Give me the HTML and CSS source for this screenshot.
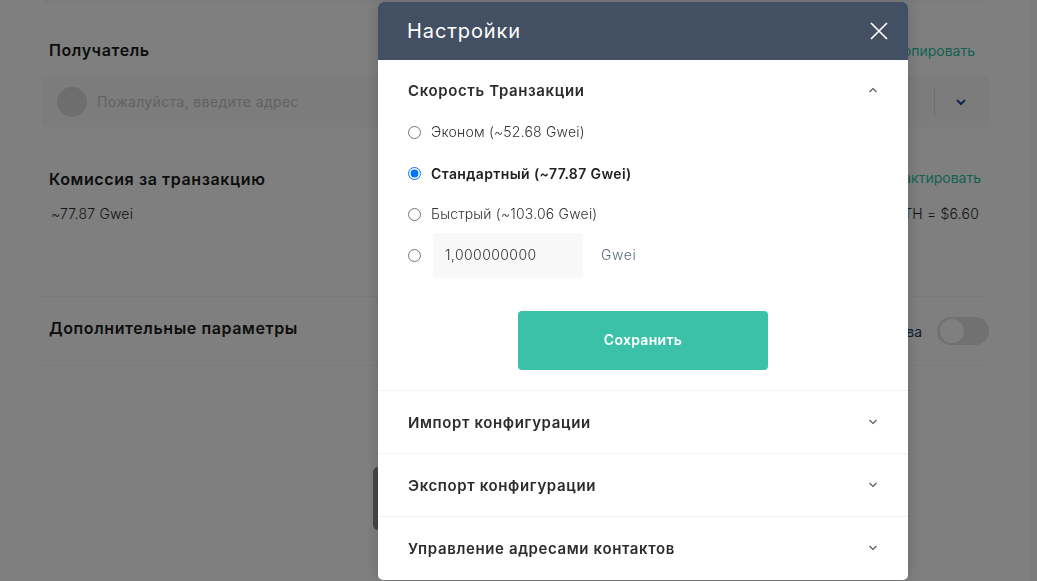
FILE: index.html
```html
<!DOCTYPE html>
<html lang="ru">
<head>
<meta charset="utf-8">
<title>Настройки</title>
<link rel="stylesheet" href="styles.css">
</head>
<body>
<div class="page">
  <main class="content">
    <div class="top-band"></div>
    <section class="recipient">
      <div class="row">
        <h2 class="label">Получатель</h2>
        <a class="link link-copy">Копировать</a>
      </div>
      <div class="address">
        <span class="avatar"></span>
        <span class="placeholder">Пожалуйста, введите адрес</span>
        <span class="divider"></span>
        <svg class="drop" width="12" height="8" viewBox="0 0 12 8"><path d="M2 2l4 4 4-4" fill="none" stroke="#2a4a9a" stroke-width="2"/></svg>
      </div>
    </section>
    <section class="fee">
      <div class="row">
        <h2 class="label">Комиссия за транзакцию</h2>
        <a class="link link-edit">Редактировать</a>
      </div>
      <div class="row fee-values">
        <span>~77.87 Gwei</span>
        <span>0.001 ETH = $6.60</span>
      </div>
    </section>
    <section class="advanced">
      <h2 class="label label-adv">Дополнительные параметры</h2>
      <div class="adv-right">
        <span class="adv-text">Только для эксперта ва</span>
        <span class="toggle"><span class="knob"></span></span>
      </div>
    </section>
  </main>
  <div class="scroll-strip"></div>
</div>
<div class="side-tab"></div>
<div class="backdrop"></div>
<div class="modal">
  <header class="modal-head">
    <h1 class="modal-title">Настройки</h1>
    <svg class="close" width="18" height="18" viewBox="0 0 18 18"><path d="M1 1l16 16M17 1L1 17" stroke="#fff" stroke-width="1.7" fill="none"/></svg>
  </header>
  <section class="acc acc-open">
    <div class="acc-head">
      <span class="acc-title">Скорость Транзакции</span>
      <svg class="chev" width="10" height="6" viewBox="0 0 10 6"><path d="M1.500 5L5 1.500 8.500 5" fill="none" stroke="#555" stroke-width="1.100"/></svg>
    </div>
    <label class="opt"><input type="radio" name="speed"><span class="opt-text">Эконом (~52.68 Gwei)</span></label>
    <label class="opt opt-on"><input type="radio" name="speed" checked><span>Стандартный (~77.87 Gwei)</span></label>
    <label class="opt"><input type="radio" name="speed"><span class="opt-text">Быстрый (~103.06 Gwei)</span></label>
    <div class="opt opt-custom">
      <input type="radio" name="speed">
      <span class="gas">1,000000000</span>
      <span class="unit">Gwei</span>
    </div>
    <div class="save-wrap"><button class="save">Сохранить</button></div>
  </section>
  <section class="acc">
    <div class="acc-head">
      <span class="acc-title">Импорт конфигурации</span>
      <svg class="chev" width="10" height="6" viewBox="0 0 10 6"><path d="M1.500 1L5 4.500 8.500 1" fill="none" stroke="#555" stroke-width="1.100"/></svg>
    </div>
  </section>
  <section class="acc">
    <div class="acc-head">
      <span class="acc-title">Экспорт конфигурации</span>
      <svg class="chev" width="10" height="6" viewBox="0 0 10 6"><path d="M1.500 1L5 4.500 8.500 1" fill="none" stroke="#555" stroke-width="1.100"/></svg>
    </div>
  </section>
  <section class="acc">
    <div class="acc-head">
      <span class="acc-title">Управление адресами контактов</span>
      <svg class="chev" width="10" height="6" viewBox="0 0 10 6"><path d="M1.500 1L5 4.500 8.500 1" fill="none" stroke="#555" stroke-width="1.100"/></svg>
    </div>
  </section>
</div>
</body>
</html>
```
FILE: styles.css
```css
* { box-sizing: border-box; }
html, body { margin: 0; height: 100%; overflow: hidden; }
body {
  font-family: "Inter", "Noto Sans", sans-serif;
  color: #2a2a2a;
  background: #fff;
}
.page { display: flex; height: 581px; border-left: 1px solid #fff; }
.content { flex: 1; padding: 0 40px 0 40px; }
.scroll-strip { width: 8px; background: #f8f8fc; }
.top-band { height: 3px; margin: 0 3px; background: #f9f9f9; }
.recipient { padding-top: 36px; }
.row { display: flex; justify-content: space-between; align-items: center; padding: 0 8px; }
.label { margin: 0; font-size: 16px; line-height: 22px; font-weight: 600; color: #1a1a1a; letter-spacing: .6px; }
.label-adv { margin-bottom: 7px; }
.link { font-size: 14px; color: #26c4a4; }
.link-copy { margin-right: 6px; }
.link-edit { margin-bottom: 3px; }
.address {
  display: flex; align-items: center; height: 51px; margin-top: 15px;
  padding: 0 20px 0 16px; background: #f8f8f8; border-radius: 4px;
}
.avatar { width: 30px; height: 30px; border-radius: 50%; background: #dcdcdc; }
.placeholder { margin-left: 10px; flex: 1; font-size: 14px; color: #c4c4c4; letter-spacing: .36px; }
.divider { width: 1px; height: 30px; background: #dcdcdc; margin-right: 20px; }
.drop { margin-right: 2px; }
.fee { padding-top: 41px; }
.fee-values { margin-top: 14px; padding: 0 10px 0 10px; font-size: 14px; font-weight: 300; line-height: 20px; letter-spacing: .2px; }
.advanced {
  display: flex; justify-content: space-between; align-items: center;
  margin-top: 72px; height: 70px; padding-left: 8px;
  border-top: 1px solid #f4f4f4; border-bottom: 1px solid #f4f4f4;
}
.adv-right { display: flex; align-items: center; gap: 15px; }
.adv-text { font-size: 14px; color: #2a3a5a; }
.toggle { display: flex; align-items: center; width: 52px; height: 28px; padding: 3px; border-radius: 14px; background: #e2e2e2; }
.knob { width: 24px; height: 24px; border-radius: 50%; background: #fff; }
.side-tab {
  position: absolute; left: 373px; top: 467px; width: 20px; height: 63px;
  border-radius: 5px; background: #8f8f8f;
}
.backdrop { position: fixed; inset: 0; background: rgba(0, 0, 0, .5); }
.modal {
  position: absolute; left: 378px; top: 2px; width: 530px; height: 578px;
  background: #fff; border-radius: 5px; overflow: hidden;
  box-shadow: 0 0 14px rgba(0, 0, 0, .18);
}
.modal-head {
  display: flex; justify-content: space-between; align-items: center;
  height: 58px; padding: 0 20px 0 29px; background: #434f62; color: #fff;
}
.modal-title { margin: 0; font-size: 20px; font-weight: 400; letter-spacing: .9px; }
.acc { border-bottom: 1px solid #f2f2f6; }
.acc:last-child { border-bottom: 0; }
.acc-head {
  display: flex; justify-content: space-between; align-items: center;
  height: 62px; padding: 0 30px;
}
.acc-open .acc-head { height: 52px; padding-top: 8px; padding-bottom: 0; }
.acc-title { font-size: 15px; font-weight: 600; color: #2c2c2c; letter-spacing: .62px; }
.opt {
  display: flex; align-items: center; height: 41px; padding-left: 30px;
  font-size: 14px; font-weight: 300; color: #333; letter-spacing: .2px;
}
.opt input { margin: 0 10px 0 0; width: 13px; height: 13px; }
.opt-text { padding-bottom: 2px; }
.opt-on { font-weight: 600; color: #222; letter-spacing: .38px; }
.opt-custom { height: 45px; margin-top: -2px; }
.opt-custom input { margin-right: 12px; }
.gas {
  display: flex; align-items: center; width: 150px; height: 45px; padding: 0 0 2px 12px;
  background: #f8f8f8; border-radius: 4px; color: #333; letter-spacing: .42px;
}
.unit { margin-left: 18px; padding-bottom: 2px; color: #5f6b80; letter-spacing: .6px; }
.save-wrap { display: flex; justify-content: center; padding: 33px 0 20px; }
.save {
  width: 250px; height: 59px; padding: 0 0 2px; border: 0; border-radius: 4px; background: #3bc1a8;
  color: #fff; font: 600 14px "Inter", "Noto Sans", sans-serif; letter-spacing: .3px;
}
```
